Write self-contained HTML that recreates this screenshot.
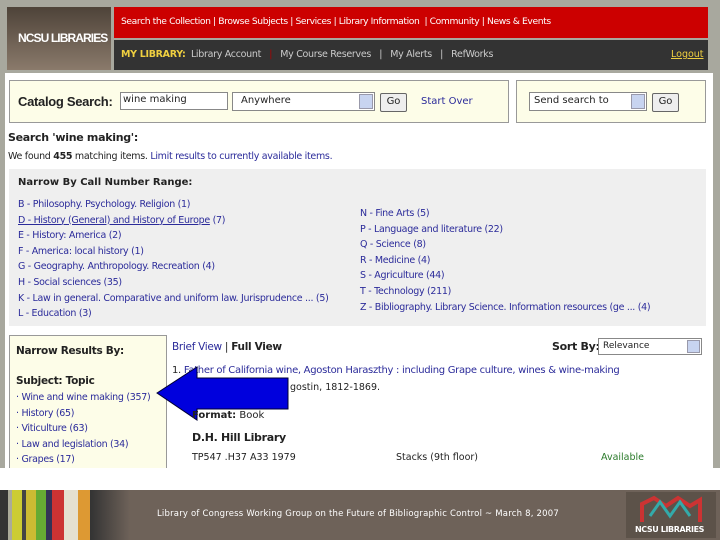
<!DOCTYPE html>
<html><head><style>
*{margin:0;padding:0;box-sizing:border-box}
body{width:720px;height:540px;overflow:hidden;background:#fff;font-family:"DejaVu Sans","Liberation Sans",sans-serif;font-size:10px;position:relative;color:#222}
.a{position:absolute}
a{color:#2b2b9a;text-decoration:none}
.t{white-space:nowrap}
</style></head><body>
<div class="a" style="left:0;top:0;width:720px;height:468px;background:#a8a89e"></div>
<div class="a" style="left:7px;top:7px;width:104px;height:63px;background:linear-gradient(#4e4339,#8a7a6b);"></div>
<div class="a t" style="left:18px;top:31px;color:#fff;font-weight:bold;font-size:12px;letter-spacing:-0.9px;font-family:'Liberation Sans',sans-serif">NCSU LIBRARIES</div>
<div class="a" style="left:114px;top:7px;width:594px;height:31px;background:#cc0000"></div>
<div class="a t" style="left:121px;top:16px;color:#fff;font-size:9.2px;letter-spacing:-0.4px">Search the Collection | Browse Subjects | Services | Library Information &nbsp;| Community | News &amp; Events</div>
<div class="a" style="left:114px;top:40px;width:594px;height:30px;background:#333"></div>
<div class="a t" style="left:121px;top:49px;color:#ccc;font-size:9.5px;letter-spacing:-0.3px"><b style="color:#f0d040">MY LIBRARY:</b>&nbsp; Library Account &nbsp; <span style="color:#a00">|</span> &nbsp; My Course Reserves &nbsp; | &nbsp; My Alerts &nbsp; | &nbsp; RefWorks</div>
<div class="a t" style="left:671px;top:49px;color:#f0d040;font-size:9.5px;text-decoration:underline">Logout</div>
<div class="a" style="left:5px;top:73px;width:708px;height:395px;background:#fff"></div>
<div class="a" style="left:9px;top:80px;width:500px;height:43px;background:#fdfde8;border:1px solid #999"></div>
<div class="a t" style="left:18px;top:94px;font-size:13px;font-weight:bold;letter-spacing:-0.3px;color:#222;font-family:'Liberation Sans',sans-serif">Catalog Search:</div>
<div class="a t" style="left:120px;top:92px;width:108px;height:18px;background:#fff;border:1px solid #888;padding:1px 2px;font-size:10px">wine making</div>
<div class="a t" style="left:232px;top:92px;width:143px;height:19px;background:#fff;border:1px solid #888;padding:2px 8px;font-size:10px">Anywhere<span class="a" style="right:1px;top:1px;width:14px;height:15px;background:#c8d4f0;border:1px solid #99a"></span></div>
<div class="a" style="left:380px;top:93px;width:27px;height:19px;background:#eee;border:1px solid #666;border-radius:2px;text-align:center;padding-top:2px">Go</div>
<div class="a t" style="left:421px;top:96px;color:#2b2b9a">Start Over</div>
<div class="a" style="left:516px;top:80px;width:190px;height:43px;background:#fdfde8;border:1px solid #999"></div>
<div class="a t" style="left:529px;top:92px;width:118px;height:19px;background:#fff;border:1px solid #888;padding:2px 4px;font-size:10px">Send search to<span class="a" style="right:1px;top:1px;width:14px;height:15px;background:#c8d4f0;border:1px solid #99a"></span></div>
<div class="a" style="left:652px;top:93px;width:27px;height:19px;background:#eee;border:1px solid #666;border-radius:2px;text-align:center;padding-top:2px">Go</div>
<div class="a t" style="left:8px;top:131px;font-weight:bold;font-size:11px;letter-spacing:-0.3px">Search 'wine making':</div>
<div class="a t" style="left:8px;top:151px;font-size:9.5px;letter-spacing:-0.3px">We found <b>455</b> matching items. <a>Limit results to currently available items.</a></div>
<div class="a" style="left:9px;top:169px;width:697px;height:157px;background:#efefef"></div>
<div class="a t" style="left:18px;top:177px;font-weight:bold;font-size:10px">Narrow By Call Number Range:</div>
<div class="a t" style="left:18px;top:197px;font-size:9.5px;line-height:15.6px;letter-spacing:-0.3px;color:#2b2b9a">B - Philosophy. Psychology. Religion (1)<br><u>D - History (General) and History of Europe</u> (7)<br>E - History: America (2)<br>F - America: local history (1)<br>G - Geography. Anthropology. Recreation (4)<br>H - Social sciences (35)<br>K - Law in general. Comparative and uniform law. Jurisprudence ... (5)<br>L - Education (3)</div>
<div class="a t" style="left:360px;top:206px;font-size:9.5px;line-height:15.6px;letter-spacing:-0.3px;color:#2b2b9a">N - Fine Arts (5)<br>P - Language and literature (22)<br>Q - Science (8)<br>R - Medicine (4)<br>S - Agriculture (44)<br>T - Technology (211)<br>Z - Bibliography. Library Science. Information resources (ge ... (4)</div>
<div class="a" style="left:9px;top:335px;width:158px;height:133px;background:#fdfde8;border:1px solid #999;border-bottom:none"></div>
<div class="a t" style="left:16px;top:345px;font-weight:bold;font-size:10.5px;letter-spacing:-0.3px">Narrow Results By:</div>
<div class="a t" style="left:16px;top:375px;font-weight:bold;font-size:10.5px;letter-spacing:-0.3px">Subject: Topic</div>
<div class="a t" style="left:16px;top:390px;font-size:9.5px;line-height:15.5px;color:#2b2b9a;letter-spacing:-0.3px">· Wine and wine making (357)<br>· History (65)<br>· Viticulture (63)<br>· Law and legislation (34)<br>· Grapes (17)</div>
<div class="a t" style="left:172px;top:341px;font-size:10.5px;letter-spacing:-0.3px"><a>Brief View</a> | <b>Full View</b></div>
<div class="a t" style="left:552px;top:340px;font-size:11px;font-weight:bold;letter-spacing:-0.3px">Sort By:</div>
<div class="a t" style="left:598px;top:338px;width:104px;height:17px;background:#fff;border:1px solid #888;padding:2px 4px;font-size:9px">Relevance<span class="a" style="right:1px;top:1px;width:13px;height:13px;background:#c8d4f0;border:1px solid #99a"></span></div>
<div class="a t" style="left:172px;top:365px;font-size:10px;letter-spacing:-0.3px">1. <a>Father of California wine, Agoston Haraszthy : including Grape culture, wines &amp; wine-making</a></div>
<div class="a t" style="left:290px;top:382px;font-size:9.5px">gostin, 1812-1869.</div>
<svg class="a" style="left:155px;top:366px" width="135" height="56"><polygon points="2,27 42,1 42,12 133,12 133,43 42,43 42,54" fill="#0000dd" stroke="#003" stroke-width="1"/></svg>
<div class="a t" style="left:192px;top:410px;font-size:10px"><b>Format:</b> Book</div>
<div class="a t" style="left:192px;top:431px;font-size:11px;font-weight:bold;letter-spacing:-0.3px">D.H. Hill Library</div>
<div class="a t" style="left:192px;top:452px;font-size:9.5px">TP547 .H37 A33 1979</div>
<div class="a t" style="left:396px;top:452px;font-size:9.5px">Stacks (9th floor)</div>
<div class="a t" style="left:601px;top:452px;font-size:9.5px;color:#2a7a2a">Available</div>
<div class="a" style="left:0;top:490px;width:720px;height:50px;background:#6e6259"></div>
<div class="a" style="left:0;top:490px;width:130px;height:50px;background:linear-gradient(90deg,#333 0,#333 8px,#aa9 8px,#aa9 12px,#cc3 12px,#cc3 22px,#444 22px,#444 26px,#cb3 26px,#cb3 36px,#6a3 36px,#6a3 46px,#335 46px,#335 52px,#c33 52px,#c33 64px,#e5e0d0 64px,#e5e0d0 78px,#d93 78px,#d93 90px,#333 90px,#6e6259 130px)"></div>
<div class="a t" style="left:157px;top:509px;color:#fff;font-size:8.5px;letter-spacing:0.2px">Library of Congress Working Group on the Future of Bibliographic Control ~ March 8, 2007</div>
<div class="a" style="left:626px;top:492px;width:90px;height:46px;background:#5c5249"></div>
<svg class="a" style="left:638px;top:494px" width="64" height="30"><path d="M4,28 L4,10 L16,4 L28,12 L40,4 L52,12 L62,6 L62,28" fill="none" stroke="#c33" stroke-width="4"/><path d="M12,22 L22,8 L32,22 L42,8 L52,22" fill="none" stroke="#3aa" stroke-width="3"/></svg>
<div class="a t" style="left:635px;top:525px;color:#fff;font-size:8px;font-weight:bold;letter-spacing:-0.4px">NCSU LIBRARIES</div>
</body></html>
